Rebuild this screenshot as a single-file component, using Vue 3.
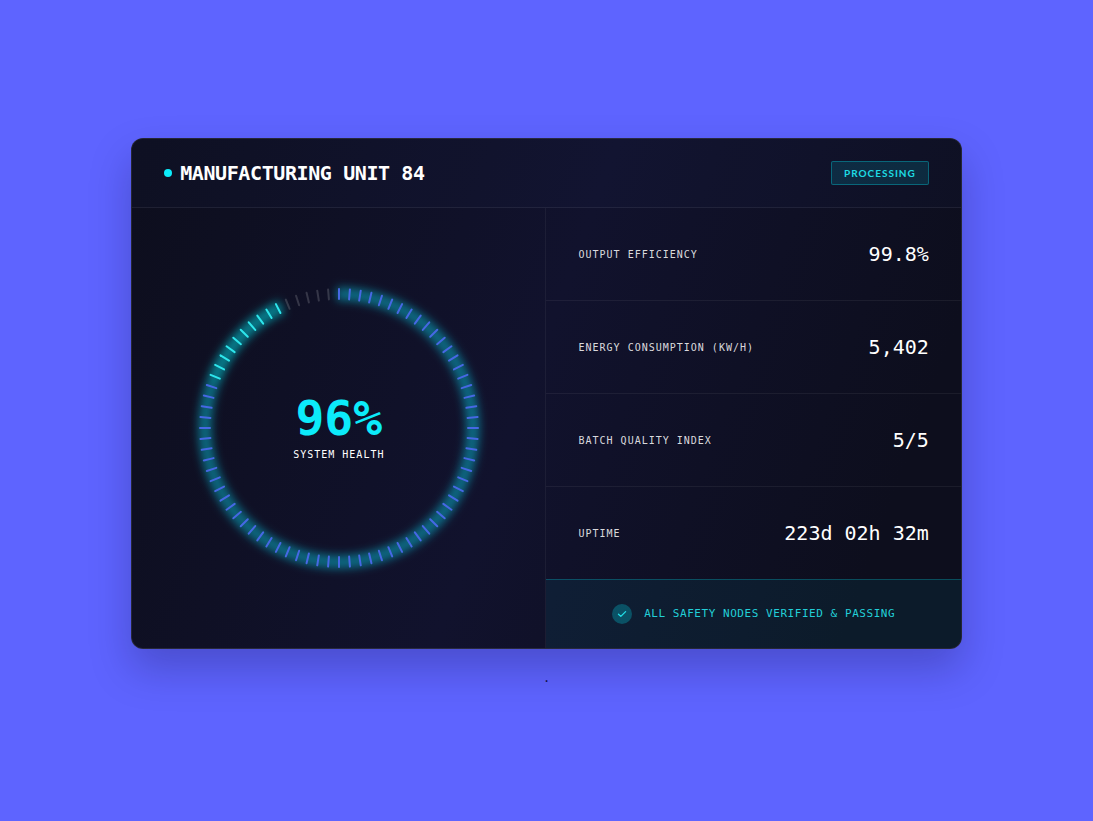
<script setup>
const tickCount = 80
const ticks = Array.from({ length: tickCount }, (_, i) => ({
  angle: (i * 360) / tickCount,
  kind: i < 65 ? 'base' : i < 75 ? 'peak' : 'off',
}))

const metrics = [
  { label: 'OUTPUT EFFICIENCY', value: '99.8%' },
  { label: 'ENERGY CONSUMPTION (KW/H)', value: '5,402' },
  { label: 'BATCH QUALITY INDEX', value: '5/5' },
  { label: 'UPTIME', value: '223d 02h 32m' },
]
</script>

<template>
  <main class="stage">
    <article class="card">
      <header class="head">
        <h1 class="title"><span class="dot"></span>MANUFACTURING UNIT 84</h1>
        <span class="badge">PROCESSING</span>
      </header>
      <div class="body">
        <section class="health">
          <div class="gauge">
            <svg class="ring" viewBox="0 0 280 280" aria-hidden="true">
              <g class="glow" transform="rotate(-91 140 140)">
                <circle class="arc base-arc" cx="140" cy="140" r="134" pathLength="80" stroke-dasharray="64.8 15.2" />
                <circle class="arc peak-arc" cx="140" cy="140" r="134" pathLength="80" stroke-dasharray="0 64.8 9.8 5.4" />
              </g>
              <rect
                v-for="t in ticks"
                :key="t.angle"
                :class="['tick', t.kind]"
                x="139"
                y="0"
                width="2"
                height="12"
                rx="1"
                :transform="`rotate(${t.angle} 140 140)`"
              />
            </svg>
            <div class="reading">
              <strong class="percent">96%</strong>
              <span class="caption">SYSTEM HEALTH</span>
            </div>
          </div>
        </section>
        <section class="data">
          <dl class="metrics">
            <div v-for="m in metrics" :key="m.label" class="row">
              <dt>{{ m.label }}</dt>
              <dd>{{ m.value }}</dd>
            </div>
          </dl>
          <footer class="status">
            <span class="check">
              <svg viewBox="0 0 20 20" aria-hidden="true"><path d="M6.5 10.2 8.8 12.4 13.6 7.6" /></svg>
            </span>
            <span>ALL SAFETY NODES VERIFIED &amp; PASSING</span>
          </footer>
        </section>
      </div>
    </article>
    <p class="mark">.</p>
  </main>
</template>

<style>
body {
  margin: 0;
  background: #5e64ff;
}
</style>

<style scoped>
* {
  box-sizing: border-box;
}
.stage {
  min-height: 100vh;
  display: flex;
  flex-direction: column;
  align-items: center;
  justify-content: center;
  background: #5e64ff;
  font-family: "DejaVu Sans Mono", "Liberation Mono", monospace;
}
.card {
  width: 76%;
  border: 1px solid rgba(255, 255, 255, 0.1);
  border-radius: 12px;
  overflow: hidden;
  color: #fff;
  background: linear-gradient(110deg, #0d0e1d 0%, #11122d 48%, #0d0e1d 88%) border-box;
  box-shadow: 0 20px 40px rgba(15, 12, 60, 0.25);
}
.head {
  display: flex;
  align-items: center;
  justify-content: space-between;
  padding: 22px 32px;
  border-bottom: 1px solid rgba(255, 255, 255, 0.07);
  background: rgba(30, 36, 90, 0.1);
}
.title {
  display: flex;
  align-items: center;
  gap: 8px;
  margin: 0;
  font-size: 20px;
  line-height: 24px;
  font-weight: 700;
  letter-spacing: -0.02em;
}
.dot {
  width: 8px;
  height: 8px;
  border-radius: 50%;
  background: #0cebfa;
}
.badge {
  padding: 5px 12px;
  border: 1px solid rgba(0, 240, 255, 0.3);
  border-radius: 2px;
  background: rgba(0, 240, 255, 0.12);
  color: #1edbe4;
  font-family: Lato, Inter, "Liberation Sans", sans-serif;
  font-size: 10px;
  line-height: 12px;
  font-weight: 700;
  letter-spacing: 1px;
}
.body {
  display: grid;
  grid-template-columns: 1fr 1fr;
}
.health {
  display: grid;
  place-items: center;
  border-right: 1px solid rgba(255, 255, 255, 0.05);
}
.gauge {
  display: grid;
  place-items: center;
}
.gauge > * {
  grid-area: 1 / 1;
}
.ring {
  width: 280px;
  height: 280px;
  overflow: visible;
}
.glow {
  filter: blur(4px);
}
.arc {
  fill: none;
  stroke-width: 14;
}
.base-arc {
  stroke: rgba(10, 190, 215, 0.5);
}
.peak-arc {
  stroke: rgba(0, 215, 225, 0.54);
}
.tick.base {
  fill: #4668e4;
}
.tick.peak {
  fill: #2ee6ec;
}
.tick.off {
  fill: rgba(255, 255, 255, 0.16);
}
.reading {
  display: flex;
  flex-direction: column;
  align-items: center;
}
.percent {
  color: #0cebfa;
  font-size: 48px;
  line-height: 48px;
  font-weight: 700;
}
.caption {
  margin-top: 6px;
  font-size: 10px;
  line-height: 14px;
  letter-spacing: 1px;
}
.metrics {
  margin: 0;
}
.row {
  display: flex;
  align-items: center;
  justify-content: space-between;
  padding: 32px;
  border-bottom: 1px solid rgba(255, 255, 255, 0.06);
}
.row:last-child {
  border-bottom: 0;
}
dt {
  font-size: 10px;
  letter-spacing: 1px;
  color: rgba(255, 255, 255, 0.85);
}
dd {
  margin: 0;
  font-size: 20px;
  line-height: 28px;
}
.status {
  display: flex;
  align-items: center;
  justify-content: center;
  gap: 12px;
  padding: 24px 32px;
  border-top: 1px solid rgba(0, 240, 255, 0.24);
  background: rgba(0, 240, 255, 0.06);
  color: #22cfd8;
  font-size: 11px;
  line-height: 20px;
  letter-spacing: 0.05em;
}
.check {
  display: flex;
  width: 20px;
  height: 20px;
  border-radius: 50%;
  background: rgba(0, 240, 255, 0.25);
}
.check path {
  fill: none;
  stroke: #22dfe8;
  stroke-width: 1.3;
  stroke-linecap: round;
  stroke-linejoin: round;
}
.mark {
  margin: 24px 0 0;
  color: #10104a;
  font-size: 12px;
  line-height: 10px;
}
</style>
